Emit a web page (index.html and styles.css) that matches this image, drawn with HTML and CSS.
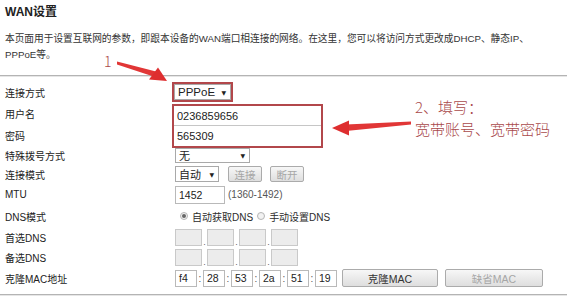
FILE: index.html
```html
<!DOCTYPE html>
<html lang="zh-CN">
<head>
  <meta charset="UTF-8" />
  <title>WAN设置</title>
  <link rel="stylesheet" href="styles.css">
</head>
<body>
  <div class="page">
    <h1 class="title">WAN设置</h1>
    <p class="desc">本页面用于设置互联网的参数，即跟本设备的WAN端口相连接的网络。在这里，您可以将访问方式更改成DHCP、静态IP、<br>PPPoE等。</p>
    <div class="rule"></div>

    <div class="form">
      <div class="label">连接方式</div>
      <div class="cell">
        <span class="mark">
          <span class="select sel-type">PPPoE <i class="caret">▼</i></span>
        </span>
      </div>

      <div class="label">用户名</div>
      <div class="cell cell-account">
        <div class="mark mark-account">
          <div class="input wide">0236859656</div>
          <div class="input wide">565309</div>
        </div>
      </div>
      <div class="label">密码</div>

      <div class="label">特殊拨号方式</div>
      <div class="cell ctl">
        <span class="select sel-dial">无 <i class="caret">▼</i></span>
      </div>

      <div class="label">连接模式</div>
      <div class="cell ctl">
        <span class="select sel-mode">自动 <i class="caret">▼</i></span>
        <span class="btn btn-small off">连接</span>
        <span class="btn btn-small off">断开</span>
      </div>

      <div class="label">MTU</div>
      <div class="cell ctl">
        <span class="input mtu">1452</span>
        <span class="hint">(1360-1492)</span>
      </div>

      <div class="label">DNS模式</div>
      <div class="cell ctl">
        <span class="radio on"></span><span class="radio-text">自动获取DNS</span>
        <span class="radio"></span><span class="radio-text">手动设置DNS</span>
      </div>

      <div class="label">首选DNS</div>
      <div class="cell ctl">
        <span class="ip"></span><span class="sep">.</span><span class="ip"></span><span class="sep">.</span><span class="ip"></span><span class="sep">.</span><span class="ip"></span>
      </div>

      <div class="label">备选DNS</div>
      <div class="cell ctl">
        <span class="ip"></span><span class="sep">.</span><span class="ip"></span><span class="sep">.</span><span class="ip"></span><span class="sep">.</span><span class="ip"></span>
      </div>

      <div class="label">克隆MAC地址</div>
      <div class="cell ctl">
        <span class="input mac">f4</span><span class="colon">:</span><span class="input mac">28</span><span class="colon">:</span><span class="input mac">53</span><span class="colon">:</span><span class="input mac">2a</span><span class="colon">:</span><span class="input mac">51</span><span class="colon">:</span><span class="input mac">19</span>
        <span class="btn btn-mac">克隆MAC</span>
        <span class="btn btn-mac off">缺省MAC</span>
      </div>
    </div>
    <div class="rule rule-bottom"></div>

    <!-- annotations drawn over the form -->
    <div class="note note-1">1</div>
    <div class="note note-2">2、填写：<br>宽带账号、宽带密码</div>
    <svg class="arrows" width="569" height="298" viewBox="0 0 569 298">
      <path d="M117 61.5 L156 71.5 L155 77 L117 64.5 Z" fill="#e13636"/>
      <path d="M167 81 L149 79.5 L158 67.5 Z" fill="#de2e2f"/>
      <path d="M411 121.5 L346 124.5 L346 131 L411 124.5 Z" fill="#e13636"/>
      <path d="M332 128 L349 120.5 L349 135.5 Z" fill="#de2e2f"/>
    </svg>
  </div>
</body>
</html>
```

FILE: styles.css
```css
* { margin: 0; padding: 0; box-sizing: border-box; }
body {
  font-family: "Liberation Sans", "Noto Sans CJK SC", sans-serif;
  font-size: 10px;
  color: #2b2b2b;
  background: #fff;
}
.page {
  position: relative;
  width: 569px;
  height: 298px;
  overflow: hidden;
}
.title {
  font-size: 12px;
  font-weight: bold;
  line-height: 15px;
  padding: 5px 0 0 5px;
  color: #222;
}
.desc {
  margin-top: 11px;
  padding-left: 5px;
  line-height: 16px;
  font-size: 9.7px;
  color: #333;
}
.rule {
  margin-top: 12px;
  width: 567px;
  border-top: 1px solid #b4b4b4;
  border-bottom: 1px solid #e6e6e6;
}
.rule-bottom {
  margin-top: 5px;
}
.form {
  margin-top: 4px;
  padding-left: 5px;
  display: grid;
  grid-template-columns: 167px 1fr;
  grid-template-rows: 22px 21px 22px 18px 20px 21px 22px 20px 20px 22px;
}
.label {
  display: flex;
  align-items: center;
  color: #222;
}
.cell {
  display: flex;
  align-items: center;
}
.ctl {
  padding-left: 3px;
}
.cell-account {
  grid-row: span 2;
  align-items: flex-start;
  padding-top: 1px;
}
.mark {
  display: inline-flex;
  border: 2px solid #b2474b;
}
.mark-account {
  flex-direction: column;
  width: 151px;
}
.select {
  display: inline-flex;
  align-items: center;
  justify-content: space-between;
  background: #fff;
  border: 1px solid #a9a9a9;
  padding: 0 4px 0 3px;
  font-size: 11px;
  color: #222;
}
.caret {
  font-style: normal;
  font-size: 6px;
  font-family: "DejaVu Sans", sans-serif;
}
.sel-type {
  width: 57px;
  height: 16px;
  font-size: 11.5px;
}
.sel-dial {
  width: 75px;
  height: 15px;
}
.sel-mode {
  width: 44px;
  height: 16px;
}
.input {
  display: inline-flex;
  align-items: center;
  background: #fff;
  border: 1px solid #b9b9b9;
  padding-left: 3px;
  font-size: 11px;
  color: #222;
}
.wide {
  height: 20px;
  border: none;
  border-bottom: 1px solid #c6c6c6;
}
.wide:last-child {
  border-bottom: none;
}
.mtu {
  width: 50px;
  height: 18px;
  font-size: 10.5px;
}
.hint {
  margin-left: 3px;
  color: #555;
  font-size: 10px;
}
.btn {
  display: inline-flex;
  align-items: center;
  justify-content: center;
  background: linear-gradient(#f7f7f7, #dedede);
  border: 1px solid #ababab;
  border-radius: 2px;
  color: #333;
  font-size: 10.5px;
}
.btn.off {
  color: #a6a6a6;
}
.btn-small {
  width: 34px;
  height: 16px;
  margin-left: 9px;
}
.btn-small + .btn-small {
  margin-left: 8px;
}
.radio {
  width: 8px;
  height: 8px;
  margin-left: 5px;
  border-radius: 50%;
  border: 1px solid #b5b5b5;
  background: #f2f2f2;
  display: inline-flex;
  align-items: center;
  justify-content: center;
}
.radio.on::after {
  content: "";
  width: 4px;
  height: 4px;
  border-radius: 50%;
  background: #666;
}
.radio + .radio-text {
  margin-left: 4px;
}
.radio-text + .radio {
  margin-left: 4px;
}
.ip {
  width: 27px;
  height: 17px;
  background: #ececec;
  border: 1px solid #c9c9c9;
}
.sep {
  width: 5px;
  align-self: flex-end;
  text-align: center;
  line-height: 10px;
  font-size: 9px;
  color: #666;
}
.mac {
  width: 22px;
  height: 17px;
  font-size: 10.5px;
}
.colon {
  width: 6px;
  text-align: center;
  color: #555;
  font-size: 10px;
}
.btn-mac {
  width: 96px;
  height: 18px;
  margin-left: 5px;
  font-size: 10.5px;
}
.btn-mac + .btn-mac {
  width: 98px;
  margin-left: 7px;
}
.note {
  position: absolute;
  color: #a9494a;
  font-family: "Noto Sans CJK SC", sans-serif;
  font-weight: 300;
}
.note-1 {
  left: 104px;
  top: 53px;
  font-size: 14px;
  line-height: 16px;
}
.note-2 {
  left: 415px;
  top: 96px;
  font-size: 15px;
  line-height: 22px;
}
.arrows {
  position: absolute;
  left: 0;
  top: 0;
  pointer-events: none;
}
```
